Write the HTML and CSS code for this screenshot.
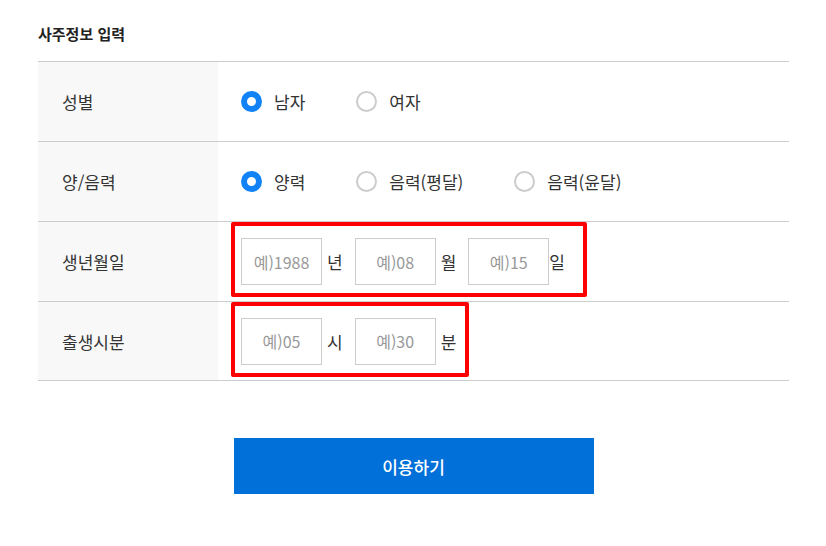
FILE: index.html
```html
<!DOCTYPE html>
<html lang="ko">
<head>
    <meta charset="UTF-8">
    <meta name="viewport" content="width=device-width, initial-scale=1.0">
    <title>사주정보 입력</title>
    <link rel="stylesheet" href="styles.css">
</head>
<body>
    <div class="wrap">
        <h2 class="tit">사주정보 입력</h2>

        <form id="sajuForm">
            <div class="row">
                <div class="label">성별</div>
                <div class="value">
                    <label class="radio"><input type="radio" name="gender" value="m" checked><span class="dot"></span>남자</label>
                    <label class="radio"><input type="radio" name="gender" value="f"><span class="dot"></span>여자</label>
                </div>
            </div>
            <div class="row">
                <div class="label">양/음력</div>
                <div class="value">
                    <label class="radio"><input type="radio" name="cal" value="solar" checked><span class="dot"></span>양력</label>
                    <label class="radio"><input type="radio" name="cal" value="lunar"><span class="dot"></span>음력(평달)</label>
                    <label class="radio"><input type="radio" name="cal" value="leap"><span class="dot"></span>음력(윤달)</label>
                </div>
            </div>
            <div class="row">
                <div class="label">생년월일</div>
                <div class="value">
                    <div class="mark mark-date">
                        <input type="text" class="num" placeholder="예)1988"><span class="unit">년</span>
                        <input type="text" class="num" placeholder="예)08"><span class="unit">월</span>
                        <input type="text" class="num" placeholder="예)15"><span class="unit unit-tight">일</span>
                    </div>
                </div>
            </div>
            <div class="row row-last">
                <div class="label">출생시분</div>
                <div class="value">
                    <div class="mark mark-time">
                        <input type="text" class="num" placeholder="예)05"><span class="unit">시</span>
                        <input type="text" class="num" placeholder="예)30"><span class="unit">분</span>
                    </div>
                </div>
            </div>

            <div class="btns">
                <button type="submit" class="btn-use">이용하기</button>
            </div>
        </form>
    </div>

    <script>
        document.getElementById("sajuForm").addEventListener("submit", function(event) {
            event.preventDefault();
        });
    </script>
</body>
</html>
```

FILE: styles.css
```css
body {
    margin: 0;
    font-family: "Noto Sans CJK KR", "Noto Sans", sans-serif;
    color: #333;
    background: #fff;
}
.wrap {
    padding: 24px 37px 0 38px;
}
.tit {
    margin: 0 0 17px;
    font-size: 15px;
    line-height: 20px;
    font-weight: bold;
    color: #222;
}
#sajuForm {
    border-top: 1px solid #ccc;
}
.row {
    display: flex;
    height: 79px;
    border-bottom: 1px solid #ccc;
}
.row-last {
    height: 78px;
}
.label {
    width: 180px;
    background: #f8f8f8;
    padding-left: 24px;
    box-sizing: border-box;
    display: flex;
    align-items: center;
    font-size: 17px;
}
.value {
    flex: 1;
    display: flex;
    align-items: center;
    padding-left: 23px;
    font-size: 17px;
}
.radio {
    display: flex;
    align-items: center;
    margin-right: 51px;
    cursor: pointer;
}
.radio input {
    display: none;
}
.dot {
    width: 21px;
    height: 21px;
    border: 2px solid #ccc;
    border-radius: 50%;
    box-sizing: border-box;
    margin-right: 12px;
    background: #fff;
}
.radio input:checked + .dot {
    border: 6px solid #1283f7;
}
.mark {
    position: relative;
    display: flex;
    align-items: center;
}
.mark::after {
    content: "";
    position: absolute;
    top: -16px;
    bottom: -12px;
    left: -10px;
    border: 4px solid #f00;
    border-radius: 2px;
    pointer-events: none;
}
.mark-date::after {
    right: -22px;
}
.mark-time::after {
    right: -13px;
}
.num {
    width: 81px;
    height: 47px;
    box-sizing: border-box;
    border: 1px solid #ccc;
    font-family: inherit;
    font-size: 16px;
    text-align: center;
    color: #333;
    padding: 0;
}
.num::placeholder {
    color: #999;
}
.unit {
    margin: 0 12px 0 5px;
    font-size: 17px;
}
.unit:last-child {
    margin-right: 0;
}
.unit-tight {
    margin-left: 0;
}
.btns {
    display: flex;
    justify-content: center;
    padding-top: 57px;
}
.btn-use {
    width: 360px;
    height: 56px;
    border: none;
    background: #0270d9;
    color: #fff;
    font-family: inherit;
    font-size: 17px;
    font-weight: 500;
    cursor: pointer;
}
```
